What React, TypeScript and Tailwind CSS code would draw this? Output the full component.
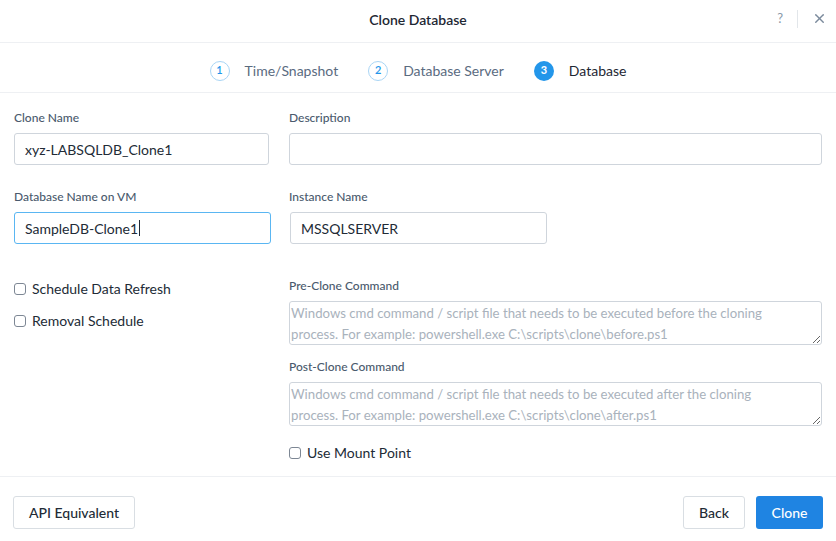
import { X } from "lucide-react";

const Step = ({ n, label, active }: { n: number; label: string; active?: boolean }) => (
  <div className="flex items-center gap-[15px]">
    <span
      className={
        active
          ? "flex h-[20px] w-[20px] items-center justify-center rounded-full bg-[#2396ea] text-[11px] font-bold text-white"
          : "flex h-[20px] w-[20px] items-center justify-center rounded-full border border-[#a9d5f5] text-[11px] font-semibold text-[#2396ea]"
      }
    >
      {n}
    </span>
    <span className={active ? "text-[14px] text-[#1e2733]" : "text-[14px] text-[#5a6b7f]"}>{label}</span>
  </div>
);

const Label = ({ children }: { children: string }) => (
  <p className="mb-[6px] text-[12px] font-medium text-[#4a5a6d]">{children}</p>
);

const Check = ({ label }: { label: string }) => (
  <label className="flex items-center gap-[6px] text-[14px] text-[#222b36]">
    <span className="h-[12px] w-[12px] rounded-[3px] border border-[#7d8794] bg-white" />
    {label}
  </label>
);

export default function App() {
  return (
    <div className="h-[541px] w-[836px] bg-white font-['Lato','Open_Sans',sans-serif] text-[#222b36]">
      <header className="relative flex h-[43px] items-center justify-center border-b border-[#eef0f3] pb-[4px]">
        <h1 className="text-[14px] font-semibold text-[#1e2733]">Clone Database</h1>
        <div className="absolute right-[9px] top-[9px] flex items-center">
          <span className="text-[13px] text-[#8a98a8]">?</span>
          <span className="mx-[14px] h-[18px] w-px bg-[#e2e6ea]" />
          <X size={15} strokeWidth={2.2} className="text-[#7b8a9c]" />
        </div>
      </header>

      <nav className="flex h-[50px] items-center justify-center gap-[30px] border-b border-[#eef0f3] pt-[6px]">
        <Step n={1} label="Time/Snapshot" />
        <Step n={2} label="Database Server" />
        <Step n={3} label="Database" active />
      </nav>

      <main className="grid h-[384px] grid-cols-[256px_1fr] gap-x-[19px] border-b border-[#eef0f3] px-[14px] pt-[16px]">
        <div className="flex flex-col">
          <Label>Clone Name</Label>
          <input
            readOnly
            value="xyz-LABSQLDB_Clone1"
            className="h-[32px] w-[255px] rounded-[3px] border border-[#cfd5dc] px-[10px] text-[14px] text-[#222b36] outline-none"
          />
          <div className="mt-[23px]">
            <Label>Database Name on VM</Label>
          </div>
          <div className="flex h-[32px] w-[257px] items-center rounded-[3px] border border-[#5ab6f2] px-[10px] text-[14px] text-[#222b36]">
            SampleDB-Clone1<span className="ml-px h-[16px] w-px bg-[#222b36]" />
          </div>
          <div className="mt-[34px] flex flex-col gap-[11px]">
            <Check label="Schedule Data Refresh" />
            <Check label="Removal Schedule" />
          </div>
        </div>

        <div className="flex flex-col">
          <Label>Description</Label>
          <input
            readOnly
            className="h-[32px] w-full rounded-[3px] border border-[#cfd5dc] px-[10px] text-[14px] outline-none"
          />
          <div className="mt-[23px]">
            <Label>Instance Name</Label>
          </div>
          <input
            readOnly
            value="MSSQLSERVER"
            className="ml-px h-[32px] w-[257px] rounded-[3px] border border-[#cfd5dc] px-[10px] text-[14px] text-[#222b36] outline-none"
          />
          <div className="mt-[33px]">
            <Label>Pre-Clone Command</Label>
          </div>
          <textarea
            readOnly
            placeholder="Windows cmd command / script file that needs to be executed before the cloning process. For example: powershell.exe C:\scripts\clone\before.ps1"
            className="h-[44px] w-full resize-y rounded-[3px] border border-[#cfd5dc] py-px pl-px pr-[40px] text-[13.2px] leading-[21px] outline-none placeholder:text-[#a9b2bc]"
          />
          <div className="mt-[13px]">
            <Label>Post-Clone Command</Label>
          </div>
          <textarea
            readOnly
            placeholder="Windows cmd command / script file that needs to be executed after the cloning process. For example: powershell.exe C:\scripts\clone\after.ps1"
            className="h-[44px] w-full resize-y rounded-[3px] border border-[#cfd5dc] py-px pl-px pr-[40px] text-[13.2px] leading-[21px] outline-none placeholder:text-[#a9b2bc]"
          />
          <div className="mt-[16px]">
            <Check label="Use Mount Point" />
          </div>
        </div>
      </main>

      <footer className="flex items-center justify-between px-[13px] pt-[19px]">
        <button className="h-[33px] w-[122px] rounded-[3px] border border-[#d9dee3] bg-white text-[14px] font-medium text-[#222b36]">
          API Equivalent
        </button>
        <div className="flex gap-[11px]">
          <button className="h-[33px] w-[62px] rounded-[3px] border border-[#d9dee3] bg-white text-[14px] font-medium text-[#222b36]">
            Back
          </button>
          <button className="h-[33px] w-[67px] rounded-[3px] bg-[#1f84e2] text-[14px] font-medium text-white">
            Clone
          </button>
        </div>
      </footer>
    </div>
  );
}
